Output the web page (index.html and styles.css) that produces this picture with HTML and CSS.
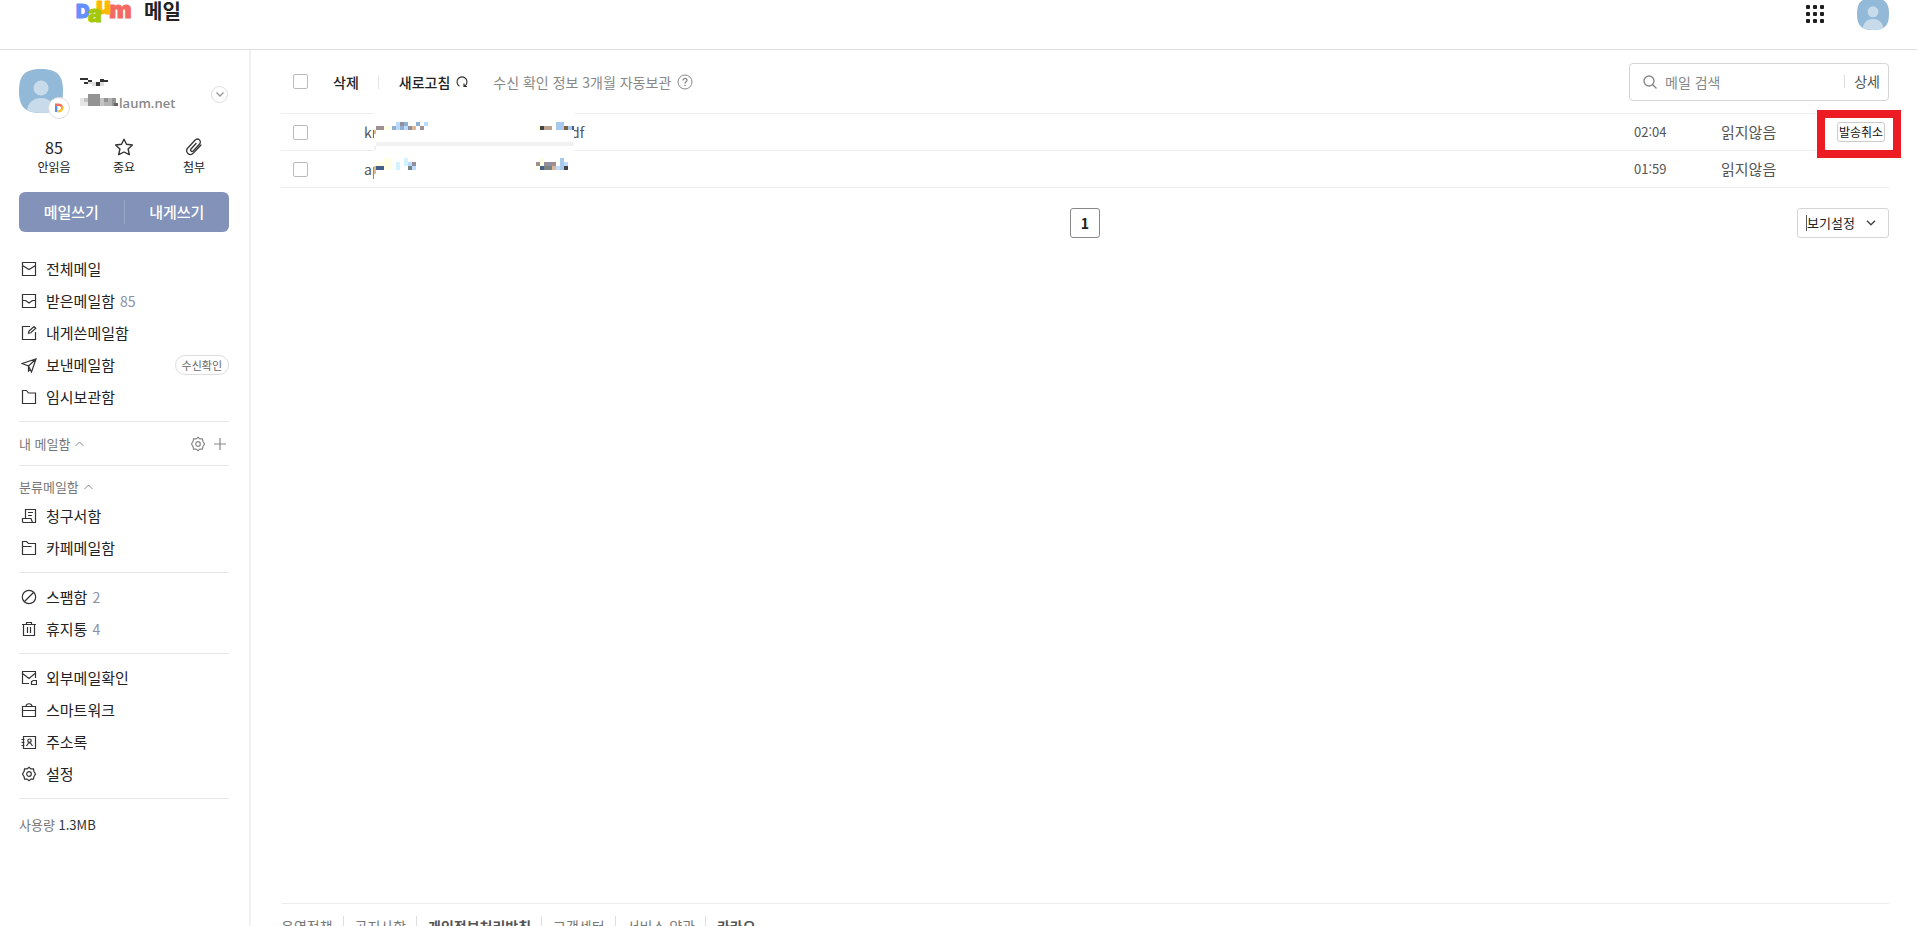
FILE: index.html
```html
<!DOCTYPE html>
<html lang="ko">
<head>
    <meta charset="UTF-8">
    <meta name="viewport" content="width=device-width, initial-scale=1.0">
    <title>Daum 메일</title>
    <link rel="stylesheet" href="styles.css">
</head>
<body>
    <header class="header">
        <a href="#" class="logo">
            <svg width="58" height="26" viewBox="0 0 58 26">
                <text class="logo-letter" x="0" y="18" font-size="19" fill="#658fff" stroke="#658fff">D</text>
                <text class="logo-letter" x="33" y="18" font-size="24" fill="#f46a62" stroke="#f46a62">m</text>
                <text class="logo-letter" x="20" y="14" font-size="23" fill="#ffb800" stroke="#ffb800">u</text>
                <text class="logo-letter" x="12" y="22" font-size="23" fill="#a4c80a" stroke="#a4c80a">a</text>
            </svg>
        </a>
        <h1 class="service-name">메일</h1>
        <div class="header-right">
            <button class="icon-button" aria-label="서비스 더보기">
                <svg width="20" height="20" fill="#1e1e1e">
                    <rect x="1" y="1" width="4" height="4" rx="1"/><rect x="8" y="1" width="4" height="4" rx="1"/><rect x="15" y="1" width="4" height="4" rx="1"/>
                    <rect x="1" y="8" width="4" height="4" rx="1"/><rect x="8" y="8" width="4" height="4" rx="1"/><rect x="15" y="8" width="4" height="4" rx="1"/>
                    <rect x="1" y="15" width="4" height="4" rx="1"/><rect x="8" y="15" width="4" height="4" rx="1"/><rect x="15" y="15" width="4" height="4" rx="1"/>
                </svg>
            </button>
            <button class="icon-button" aria-label="내 계정">
                <svg width="32" height="32" viewBox="0 0 44 44">
                    <path d="M22 0C38 0 44 6 44 22S38 44 22 44 0 38 0 22 6 0 22 0Z" fill="#92b9d7"/>
                    <circle cx="22" cy="19" r="7.5" fill="#c8dbea"/>
                    <path d="M8 41C9 33 15 29 22 29S35 33 36 41C30 45 14 45 8 41Z" fill="#c8dbea"/>
                </svg>
            </button>
        </div>
    </header>

    <div class="layout">
        <aside class="sidebar">
            <div class="profile">
                <div class="avatar">
                    <svg width="44" height="44" viewBox="0 0 44 44">
                        <path d="M22 0C38 0 44 6 44 22S38 44 22 44 0 38 0 22 6 0 22 0Z" fill="#92b9d7"/>
                        <circle cx="22" cy="19" r="7.5" fill="#c8dbea"/>
                        <path d="M8 41C9 33 15 29 22 29S35 33 36 41C30 45 14 45 8 41Z" fill="#c8dbea"/>
                    </svg>
                    <span class="avatar-badge">
                        <svg width="10" height="10" viewBox="0 0 10 10" fill="none" stroke-width="2.4">
                            <path d="M2.2 9V1.2" stroke="#5b8def"/>
                            <path d="M1 1.7h3.5c1.6 0 2.8.8 3.4 1.8" stroke="#f2705c"/>
                            <path d="M7.9 3.4c.4 1 .4 2.2 0 3.2" stroke="#f5a623"/>
                            <path d="M7.9 6.4C7.3 7.6 6.2 8.4 4.5 8.4H3.3" stroke="#f8c53a"/>
                        </svg>
                    </span>
                </div>
                <div class="profile-text">
                    <svg class="profile-name" width="28" height="8">
                        <path d="M0 0h8v2H0zM8 2h4v2H8zM4 4h4v2H4zM16 4h4v4h-4zM20 1h4v3h-4zM24 2h4v2h-4z" fill="#333"/>
                        <path d="M8 4h4v2H8zM12 4h4v4h-4zM20 4h4v4h-4z" fill="#ddd"/>
                    </svg>
                    <div class="profile-mail">
                        <svg width="39" height="12">
                            <path d="M0 4h4v8H0zM4 8h4v4H4z" fill="#e6e6e6"/>
                            <path d="M4 4h4v4H4zM20 4h4v8h-4z" fill="#c4c4c4"/>
                            <path d="M8 0h12v12H8zM24 4h4v4h-4zM32 4h4v8h-4z" fill="#939393"/>
                            <path d="M24 8h8v4h-8zM28 4h4v4h-4z" fill="#b2b2b2"/>
                            <path d="M34 9h4v3h-4z" fill="#666"/>
                        </svg>
                        <span>laum.net</span>
                    </div>
                </div>
                <button class="profile-toggle" aria-label="계정 펼치기">
                    <svg width="8" height="5" viewBox="0 0 8 5" fill="none" stroke="#999" stroke-width="1.4"><path d="M.5.5 4 4 7.5.5"/></svg>
                </button>
            </div>

            <ul class="quick">
                <li><a href="#"><span class="quick-mark">85</span><span>안읽음</span></a></li>
                <li><a href="#"><span class="quick-mark"><svg width="20" height="18" viewBox="0 0 20 18" fill="none" stroke="#333" stroke-width="1.4" stroke-linejoin="round"><path d="M10 1.2l2.5 5.1 5.9.7-4.3 4 1.2 5.7L10 14l-5.3 2.7 1.2-5.7-4.3-4 5.9-.7z"/></svg></span><span>중요</span></a></li>
                <li><a href="#"><span class="quick-mark"><svg width="18" height="18" viewBox="0 0 18 18" fill="none" stroke="#333" stroke-width="1.3" stroke-linecap="round"><path d="M11 5.500 6 11c-1.300 1.500.8 3.400 2.200 2l6-6.500C17.500 3 13-1 9.700 2.500L3 9.700c-3.800 4.200 1.800 9.300 5.600 5.200L16 7"/></svg></span><span>첨부</span></a></li>
            </ul>

            <div class="write">
                <button>메일쓰기</button>
                <button>내게쓰기</button>
            </div>

            <nav>
                <ul class="menu">
                    <li><a href="#"><svg class="icon" viewBox="0 0 16 16"><path d="M1.5 1.5h13v13h-13zM1.5 4.5 8 8.5l6.5-4"/></svg>전체메일</a></li>
                    <li><a href="#"><svg class="icon" viewBox="0 0 16 16"><path d="M1.5 1.5h13v13h-13zM1.5 7.5h3L8 10l3.5-2.5h3"/></svg>받은메일함 <span class="count">85</span></a></li>
                    <li><a href="#"><svg class="icon" viewBox="0 0 16 16"><path d="M9 1.5H1.5v13h13V7M8 6l5-4.5 1.8 1.8-5 4.5-2.3.4z"/></svg>내게쓴메일함</a></li>
                    <li><a href="#"><svg class="icon" viewBox="0 0 16 16"><path d="M1 6.5 15 2l-4.5 13-3-6zM15 2 7.5 9v5l2-2"/></svg>보낸메일함</a><button class="pill">수신확인</button></li>
                    <li><a href="#"><svg class="icon" viewBox="0 0 16 16"><path d="M1.5 1.5h4l2 2.5h7v10.5h-13z"/></svg>임시보관함</a></li>
                </ul>
                <div class="folder-title folder-own">
                    <span>내 메일함</span>
                    <svg width="9" height="6" viewBox="0 0 9 6" fill="none" stroke="#888"><path d="M.5 5l4-4 4 4"/></svg>
                    <div class="folder-tools">
                        <button class="icon-button" aria-label="메일함 설정"><svg class="icon-gray" viewBox="0 0 16 16"><path d="M8 1.3l1.9 1.6 2.500-.1.5 2.400L14.500 8l-1.600 2.800-.5 2.400-2.500-.1L8 14.700l-1.900-1.600-2.500.1-.5-2.400L1.500 8l1.600-2.800.5-2.400 2.500.1z"/><circle cx="8" cy="8" r="2.3"/></svg></button>
                        <button class="icon-button" aria-label="메일함 추가"><svg class="icon-gray" viewBox="0 0 16 16"><path d="M8 2v12M2 8h12"/></svg></button>
                    </div>
                </div>
                <ul class="menu">
                    <li class="folder-title">
                        <span>분류메일함</span>
                        <svg width="9" height="6" viewBox="0 0 9 6" fill="none" stroke="#888"><path d="M.5 5l4-4 4 4"/></svg>
                    </li>
                    <li><a href="#"><svg class="icon" viewBox="0 0 16 16"><path d="M4.500 10.500v-9h10v13h-3l-1.500-4H1.500v3c0 .6.4 1 1 1h9M7 4.500h5M7 7.500h4"/></svg>청구서함</a></li>
                    <li><a href="#"><svg class="icon" viewBox="0 0 16 16"><path d="M1.5 1.5h4l2 2h7v11h-13zM1.5 6.5h9"/></svg>카페메일함</a></li>
                </ul>
                <ul class="menu">
                    <li><a href="#"><svg class="icon" viewBox="0 0 16 16"><circle cx="8" cy="8" r="6.7"/><path d="M3.5 12.5l9-9"/></svg>스팸함 <span class="count">2</span></a></li>
                    <li><a href="#"><svg class="icon" viewBox="0 0 16 16"><path d="M1 3.5h14M5.5 3V1.5h5V3M2.5 3.5v11h11v-11M6.5 6v6M9.5 6v6"/></svg>휴지통 <span class="count">4</span></a></li>
                </ul>
                <ul class="menu">
                    <li><a href="#"><svg class="icon" viewBox="0 0 16 16"><path d="M8 13.5H1.5v-12h13V8M1.5 3.5 8 8.5l6-5M10.5 11.5c1 0 1-1 2-1h3v4h-5z"/></svg>외부메일확인</a></li>
                    <li><a href="#"><svg class="icon" viewBox="0 0 16 16"><path d="M1.5 4.5h13v10h-13zM1.5 8.5h13M5 4c.5-3 5.5-3 6 0"/></svg>스마트워크</a></li>
                    <li><a href="#"><svg class="icon" viewBox="0 0 16 16"><path d="M2.5 2.5h12v12h-12zM.5 5.5h3M.5 8.5h3M.5 11.5h3M5.5 12l2-3h2l2 3"/><circle cx="8.5" cy="6.7" r="1.7"/></svg>주소록</a></li>
                    <li><a href="#"><svg class="icon" viewBox="0 0 16 16"><path d="M8 1.3l1.900 1.600 2.500-.1.5 2.400L14.500 8l-1.600 2.800-.5 2.400-2.500-.1L8 14.700l-1.900-1.600-2.500.1-.5-2.400L1.500 8l1.600-2.800.5-2.400 2.500.1z"/><circle cx="8" cy="8" r="2.3"/></svg>설정</a></li>
                </ul>
            </nav>
            <p class="usage">사용량 <strong>1.3MB</strong></p>
        </aside>

        <main class="content">
            <div class="toolbar">
                <input type="checkbox" class="check" aria-label="전체 선택">
                <button class="tool tool-delete">삭제</button>
                <button class="tool tool-refresh">새로고침
                    <svg width="12" height="12" viewBox="0 0 12 12" fill="none" stroke="#333" stroke-width="1.2"><path d="M3.5 10.2A5 5 0 1 1 8.5 10.2M8 7.5v3h3"/></svg>
                </button>
                <p class="notice">수신 확인 정보 3개월 자동보관
                    <svg width="16" height="16" fill="none" stroke="#888"><circle cx="8" cy="8" r="7"/><path d="M6 6.5C6 3.5 10.3 4 10 6.5 9.8 7.8 8 7.7 8 9.5M8 10.8V12" stroke-width="1.3"/></svg>
                </p>
                <form class="search">
                    <svg width="14" height="14" fill="none" stroke="#888" stroke-width="1.4"><circle cx="6" cy="6" r="5"/><path d="M9.5 9.5l4 4"/></svg>
                    <input type="text" placeholder="메일 검색" aria-label="메일 검색">
                    <button type="button">상세</button>
                </form>
            </div>

            <div class="mail-list">
                <table class="mails">
                    <tr>
                        <td class="col-check"><input type="checkbox" class="check" aria-label="메일 선택"></td>
                        <td><a href="#" class="subject"><span class="subject-start">kr</span><span>df</span></a></td>
                        <td class="col-time">02:04</td>
                        <td class="col-state">읽지않음</td>
                        <td class="col-action"><div class="cancel-wrap"><button class="cancel">발송취소</button></div></td>
                    </tr>
                    <tr>
                        <td class="col-check"><input type="checkbox" class="check" aria-label="메일 선택"></td>
                        <td><a href="#" class="subject"><span class="subject-start">ap</span></a></td>
                        <td class="col-time">01:59</td>
                        <td class="col-state">읽지않음</td>
                        <td class="col-action"></td>
                    </tr>
                </table>
                <!-- 제목 가림 -->
                <svg class="mask" width="200" height="72" shape-rendering="crispEdges">
                    <rect width="200" height="72" fill="#fff"/>
                    <path d="M2 30h198v4H2zM0 34h2v4H0z" fill="#f1f1f1"/>
                    <path d="M0 18h2v4H0zM0 54h2v8H0zM38 14h4v4h-4zM178 54h4v4h-4z" fill="#dcb995"/>
                    <path d="M2 14h8v4H2zM46 14h4v4h-4zM162 50h4v4h-4zM178 50h4v4h-4z" fill="#a08f90"/>
                    <path d="M10 14h8v4h-8zM10 46h8v12h-8zM2 50h8v4H2zM162 14h4v4h-4zM166 46h4v8h-4zM162 54h4v4h-4z" fill="#ffffe6"/>
                    <path d="M18 14h4v4h-4zM30 10h4v4h-4zM42 10h4v4h-4zM26 14h4v4h-4z" fill="#8fb0d0"/>
                    <path d="M22 10h4v8h-4zM30 14h4v4h-4zM50 10h4v4h-4zM34 50h4v4h-4zM38 54h4v4h-4zM182 54h4v4h-4zM190 50h4v4h-4z" fill="#bbdaff"/>
                    <path d="M26 10h4v4h-4zM34 14h4v4h-4zM38 50h4v4h-4zM170 50h8v4h-8z" fill="#928f9c"/>
                    <path d="M2 54h8v4H2zM198 14h2v4h-2zM166 54h4v4h-4z" fill="#43608a"/>
                    <path d="M22 50h4v8h-4zM30 46h4v8h-4z" fill="#d2f3ff"/>
                    <path d="M34 54h4v4h-4zM170 54h8v4h-8z" fill="#788484"/>
                    <path d="M166 14h4v4h-4zM190 54h4v4h-4z" fill="#444"/>
                    <path d="M170 14h8v4h-8z" fill="#bca090"/>
                    <path d="M182 10h8v8h-8zM194 14h4v4h-4zM186 46h4v12h-4z" fill="#a9c9ec"/>
                    <path d="M190 14h4v4h-4z" fill="#80603f"/>
                </svg>
                <div class="highlight"></div>
            </div>

            <div class="paging">
                <button class="page">1</button>
                <div class="view">
                    <select aria-label="보기설정"><option>보기설정</option></select>
                    <svg width="10" height="6" viewBox="0 0 10 6" fill="none" stroke="#444" stroke-width="1.4"><path d="M1 .8l4 4 4-4"/></svg>
                </div>
            </div>

            <footer class="footer">
                <a href="#">운영정책</a>
                <a href="#">공지사항</a>
                <a href="#" class="strong">개인정보처리방침</a>
                <a href="#">고객센터</a>
                <a href="#">서비스 약관</a>
                <a href="#" class="strong">카카오</a>
            </footer>
        </main>
    </div>
</body>
</html>
```

FILE: styles.css
```css
* {
    margin: 0;
    padding: 0;
    box-sizing: border-box;
}

body {
    display: flex;
    flex-direction: column;
    height: 100vh;
    overflow: hidden;
    background: #fff;
    color: #222;
    font-family: "Noto Sans CJK KR", sans-serif;
    font-size: 14px;
    line-height: 20px;
}

ul {
    list-style: none;
}

a {
    color: inherit;
    text-decoration: none;
}

button,
input,
select {
    font: inherit;
    color: inherit;
    background: none;
    border: none;
}

button {
    cursor: pointer;
}

svg {
    display: block;
    flex-shrink: 0;
}

/* header */
.header {
    display: flex;
    align-items: flex-start;
    height: 50px;
    padding: 0 28px 0 76px;
    border-bottom: 1px solid #ddd;
    flex-shrink: 0;
}

.logo-letter {
    font-family: Inter, sans-serif;
    font-weight: 900;
    stroke-width: 1;
    stroke-linejoin: round;
}

.service-name {
    margin-left: 10px;
    font-size: 20px;
    line-height: 22px;
    font-weight: 700;
}

.header-right {
    display: flex;
    align-items: flex-start;
    gap: 32px;
    margin-left: auto;
}

.header-right .icon-button:first-child {
    padding-top: 4px;
}

.header-right .icon-button:last-child {
    margin-top: -2px;
}

.layout {
    display: flex;
    flex: 1;
    min-height: 0;
}

/* sidebar */
.sidebar {
    width: 251px;
    padding: 19px 20px 0 19px;
    border-right: 2px solid #f0f0f0;
    flex-shrink: 0;
}

.profile {
    display: flex;
    align-items: flex-start;
    height: 67px;
}

.avatar {
    position: relative;
}

.avatar-badge {
    position: absolute;
    right: -7px;
    bottom: -6px;
    display: flex;
    align-items: center;
    justify-content: center;
    width: 22px;
    height: 22px;
    border: 1px solid #ddd;
    border-radius: 50%;
    background: #fff;
}

.profile-text {
    padding: 9px 0 0 17px;
}

.profile-mail {
    display: flex;
    align-items: flex-start;
    margin-top: 8px;
    color: #888;
    font-family: "Open Sans", sans-serif;
    font-size: 13px;
    font-weight: 600;
    line-height: 18px;
}

.profile-toggle {
    display: flex;
    align-items: center;
    justify-content: center;
    width: 17px;
    height: 17px;
    margin: 17px 1px 0 auto;
    border: 1px solid #ddd;
    border-radius: 50%;
}

.quick {
    display: flex;
    height: 56px;
}

.quick li {
    flex: 1;
}

.quick a {
    display: flex;
    flex-direction: column;
    align-items: center;
    font-size: 12px;
}

.quick-mark {
    display: flex;
    align-items: center;
    height: 21px;
    font-size: 16px;
}

.write {
    display: flex;
    height: 40px;
    margin-bottom: 14px;
    border-radius: 6px;
    background: #8392b9;
    color: #fff;
}

.write button {
    flex: 1;
    height: 24px;
    margin-top: 8px;
    font-size: 15px;
    font-weight: 500;
}

.write button + button {
    border-left: 1px solid #99a6c8;
}

.menu {
    padding: 8px 0;
    border-bottom: 1px solid #e6e6e6;
}

.menu li {
    display: flex;
    align-items: center;
    justify-content: space-between;
    height: 32px;
}

.menu:first-child {
    padding-top: 7px;
}

.menu a {
    display: flex;
    align-items: center;
    font-size: 15px;
}

.icon,
.icon-gray {
    width: 16px;
    height: 16px;
    fill: none;
    stroke: #333;
    stroke-width: 1.2;
}

.icon {
    margin: 0 9px 0 2px;
}

.icon-gray {
    stroke: #888;
}

.count {
    margin-left: 5px;
    color: #8a8fa5;
    font-size: 14px;
}

.pill {
    height: 20px;
    padding: 0 6px;
    border: 1px solid #ddd;
    border-radius: 10px;
    color: #666;
    font-size: 11px;
    line-height: 18px;
}

.folder-title {
    display: flex;
    align-items: center;
    gap: 5px;
    color: #777;
    font-size: 13px;
}

.folder-own {
    height: 44px;
    border-bottom: 1px solid #e6e6e6;
}

.folder-tools {
    display: flex;
    gap: 6px;
    margin-left: auto;
    padding-right: 1px;
}

.menu .folder-title {
    justify-content: flex-start;
    height: 26px;
}

.usage {
    padding: 16px 0;
    color: #777;
    font-size: 13px;
}

.usage strong {
    color: #333;
    font-weight: 400;
}

/* content */
.content {
    display: flex;
    flex-direction: column;
    flex: 1;
    padding: 0 28px 0 30px;
}

.toolbar {
    display: flex;
    align-items: center;
    height: 63px;
    padding-left: 12px;
}

.check {
    appearance: none;
    display: block;
    width: 15px;
    height: 15px;
    border: 1px solid #bbb;
    border-radius: 2px;
    background: #fff;
}

.tool {
    display: flex;
    align-items: center;
    gap: 6px;
    font-weight: 500;
}

.tool-delete {
    height: 14px;
    margin-left: 25px;
    padding-right: 19px;
    border-right: 1px solid #e5e5e5;
}

.tool-refresh {
    margin-left: 20px;
}

.notice {
    display: flex;
    align-items: center;
    gap: 6px;
    margin-left: 25px;
    color: #888;
}

.search {
    display: flex;
    align-items: center;
    width: 260px;
    height: 38px;
    margin-left: auto;
    padding: 0 8px 0 13px;
    border: 1px solid #d5d5d5;
    border-radius: 4px;
}

.search input {
    flex: 1;
    min-width: 0;
    padding-left: 8px;
    outline: none;
}

.search input::placeholder {
    color: #888;
}

.search button {
    height: 13px;
    padding-left: 9px;
    border-left: 1px solid #ddd;
    color: #555;
    line-height: 13px;
}

.mail-list {
    position: relative;
}

.mails {
    width: 100%;
    border-collapse: collapse;
    table-layout: fixed;
    border-top: 1px solid #eee;
}

.mails tr {
    height: 37px;
    border-bottom: 1px solid #eee;
}

.mails td {
    vertical-align: middle;
    color: #555;
}

.mails .col-check {
    width: 83px;
    padding-left: 12px;
}

.mails .col-time {
    width: 87px;
    font-size: 13px;
}

.mails .col-state {
    width: 116px;
    font-size: 15px;
}

.mails .col-action {
    width: 52px;
}

.subject {
    display: flex;
}

.subject-start {
    width: 207px;
}

.cancel-wrap {
    display: flex;
}

.cancel {
    height: 20px;
    padding: 0 1px;
    border: 1px solid #ccc;
    border-radius: 3px;
    color: #111;
    font-size: 12px;
    line-height: 18px;
}

.mask {
    position: absolute;
    top: -1px;
    left: 93px;
}

/* red frame around the cancel button */
.highlight {
    position: absolute;
    top: -3px;
    right: -12px;
    width: 84px;
    height: 48px;
    border: 8px solid #ed1c24;
    pointer-events: none;
}

.paging {
    display: grid;
    grid-template-columns: 1fr auto 1fr;
    margin-top: 20px;
}

.page {
    grid-column: 2;
    width: 30px;
    height: 30px;
    border: 1px solid #888;
    border-radius: 3px;
    font-weight: 700;
}

.view {
    display: flex;
    align-items: center;
    justify-self: end;
    width: 92px;
    height: 30px;
    padding: 0 12px 0 8px;
    border: 1px solid #d5d5d5;
    border-radius: 3px;
}

.view select {
    appearance: none;
    flex: 1;
    min-width: 0;
    height: 16px;
    border-left: 1px solid #555;
    font-size: 13px;
    line-height: 16px;
}

.footer {
    display: flex;
    height: 23px;
    margin-top: auto;
    padding-top: 12px;
    border-top: 1px solid #eee;
    color: #777;
    flex-shrink: 0;
}

.footer a {
    flex-shrink: 0;
    height: 20px;
}

.footer a + a {
    margin-left: 10px;
    padding-left: 11px;
    border-left: 1px solid #ddd;
}

.footer .strong {
    color: #555;
    font-weight: 700;
}
```
